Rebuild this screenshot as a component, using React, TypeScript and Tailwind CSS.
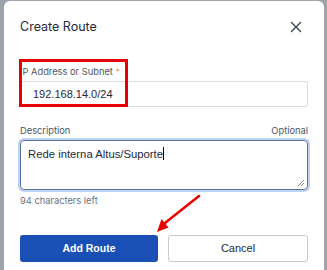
import { X } from "lucide-react";

export default function App() {
  return (
    <div className="w-[327px] h-[270px] overflow-hidden bg-[#9ea2aa] pt-px font-['Inter',sans-serif]">
      <div className="relative ml-[4px] w-[320px] h-[300px] rounded-t-[6px] bg-white px-4 pt-[14px]">
        {/* header */}
        <div className="flex h-6 items-center justify-between">
          <h2 className="text-[12.5px] leading-5 text-[#1f2937]">Create Route</h2>
          <button className="flex h-6 w-6 items-center justify-center text-[#374151]">
            <X className="h-[18px] w-[18px]" strokeWidth={1.8} />
          </button>
        </div>

        {/* ip field */}
        <div className="relative mt-[25px]">
          <label className="block text-[9.3px] leading-4 text-[#4b5563]">
            IP Address or Subnet <span className="text-[#f6a47e]">*</span>
          </label>
          <div className="mt-px flex h-[26px] items-center rounded-[3px] border border-[#d8dbe0] pl-3 font-['Liberation_Sans',sans-serif] text-[11px] text-[#1f2937]">
            192.168.14.0/24
          </div>
          <div className="absolute -left-px -top-[5px] h-[48px] w-[109px] border-[3px] border-[#e80000]" />
        </div>

        {/* description */}
        <div className="mt-4">
          <div className="flex justify-between text-[9.3px] leading-4 text-[#4b5563]">
            <span>Description</span>
            <span>Optional</span>
          </div>
          <div className="relative mt-px h-[50px] rounded-[4px] border border-[#5d6f96] pl-[7px] pt-[4px] font-['Liberation_Sans',sans-serif] text-[11.3px] leading-4 text-[#1f2937] shadow-[0_0_0_2px_#bcd3f5]">
            Rede interna Altus/Suporte<span className="inline-block h-[13px] w-px translate-y-[2px] bg-black" />
            <svg className="absolute bottom-[2px] right-[2px]" width="8" height="8" viewBox="0 0 8 8">
              <path d="M7 1L1 7M7 4L4 7" stroke="#888" strokeWidth="1" />
            </svg>
          </div>
          <p className="mt-[3px] text-[9.3px] leading-4 text-[#6b7280]">94 characters left</p>
        </div>

        {/* buttons */}
        <div className="mt-[26px] flex gap-[10px] font-['Liberation_Sans',sans-serif]">
          <button className="h-[27px] flex-1 rounded-[3px] bg-[#1a4fb6] text-[10.5px] font-bold text-white">
            Add Route
          </button>
          <button className="h-[27px] flex-1 rounded-[3px] border border-[#c6cad3] text-[11px] text-[#1f2937]">
            Cancel
          </button>
        </div>

        {/* annotation arrow */}
        <svg className="absolute left-[149px] top-[192px]" width="52" height="44" viewBox="0 0 52 44">
          <line x1="46" y1="3" x2="12" y2="30" stroke="#e80000" strokeWidth="2.5" strokeLinecap="round" />
          <polygon points="4,39 8.5,26 15.5,34.5" fill="#e80000" />
        </svg>
      </div>
    </div>
  );
}
